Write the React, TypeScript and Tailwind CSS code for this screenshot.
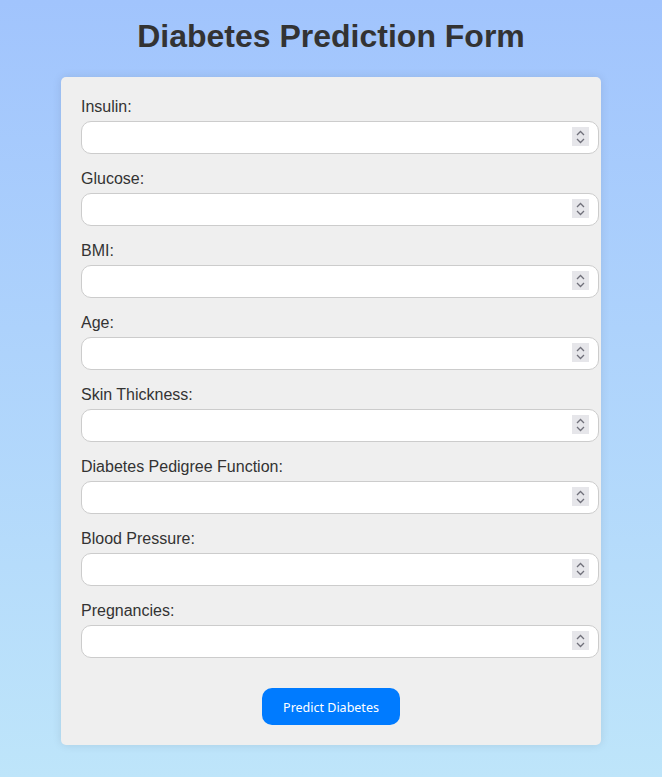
import React from "react";

const fields = [
  "Insulin",
  "Glucose",
  "BMI",
  "Age",
  "Skin Thickness",
  "Diabetes Pedigree Function",
  "Blood Pressure",
  "Pregnancies",
];

function Spinner() {
  return (
    <div className="pointer-events-none absolute right-[10px] top-[6px] flex h-[19px] w-[17px] flex-col items-center justify-center gap-[2px] bg-[#e6e6ea]">
      <svg width="9" height="6" viewBox="0 0 9 6" fill="none">
        <path d="M1 5 L4.5 1.5 L8 5" stroke="#70707a" strokeWidth="1.3" />
      </svg>
      <svg width="9" height="6" viewBox="0 0 9 6" fill="none">
        <path d="M1 1 L4.5 4.5 L8 1" stroke="#70707a" strokeWidth="1.3" />
      </svg>
    </div>
  );
}

export default function App() {
  return (
    <div
      className="min-h-screen w-full bg-gradient-to-b from-[#a1c4fd] to-[#bee5fa] pt-[18px] pb-[32px]"
      style={{ fontFamily: '"Liberation Sans", Arial, sans-serif' }}
    >
      <h1 className="text-center text-[32px] font-bold leading-[37px] text-[#333333] mb-[22px]">
        Diabetes Prediction Form
      </h1>
      <div className="mx-auto w-[540px] rounded-[5px] bg-[#efefef] p-[20px] shadow-[0_0_10px_rgba(0,0,0,0.1)]">
        {fields.map((f) => (
          <div key={f}>
            <label className="block text-[16px] leading-[19px] text-[#333333] mb-[5px]">
              {f}:
            </label>
            <div className="relative mb-[15px] w-[518px]">
              <input
                type="text"
                inputMode="decimal"
                className="box-content block h-[15px] w-[500px] rounded-[10px] border border-[#cccccc] bg-white p-[8px] text-[13.33px] outline-none"
              />
              <Spinner />
            </div>
          </div>
        ))}
        <div className="flex justify-center pt-[15px]">
          <button
            className="rounded-[10px] bg-[#007bff] px-[21px] pt-[11px] pb-[9px] text-[12.5px] leading-[17px] text-white"
            style={{ fontFamily: '"Noto Sans", sans-serif' }}
          >
            Predict Diabetes
          </button>
        </div>
      </div>
    </div>
  );
}
